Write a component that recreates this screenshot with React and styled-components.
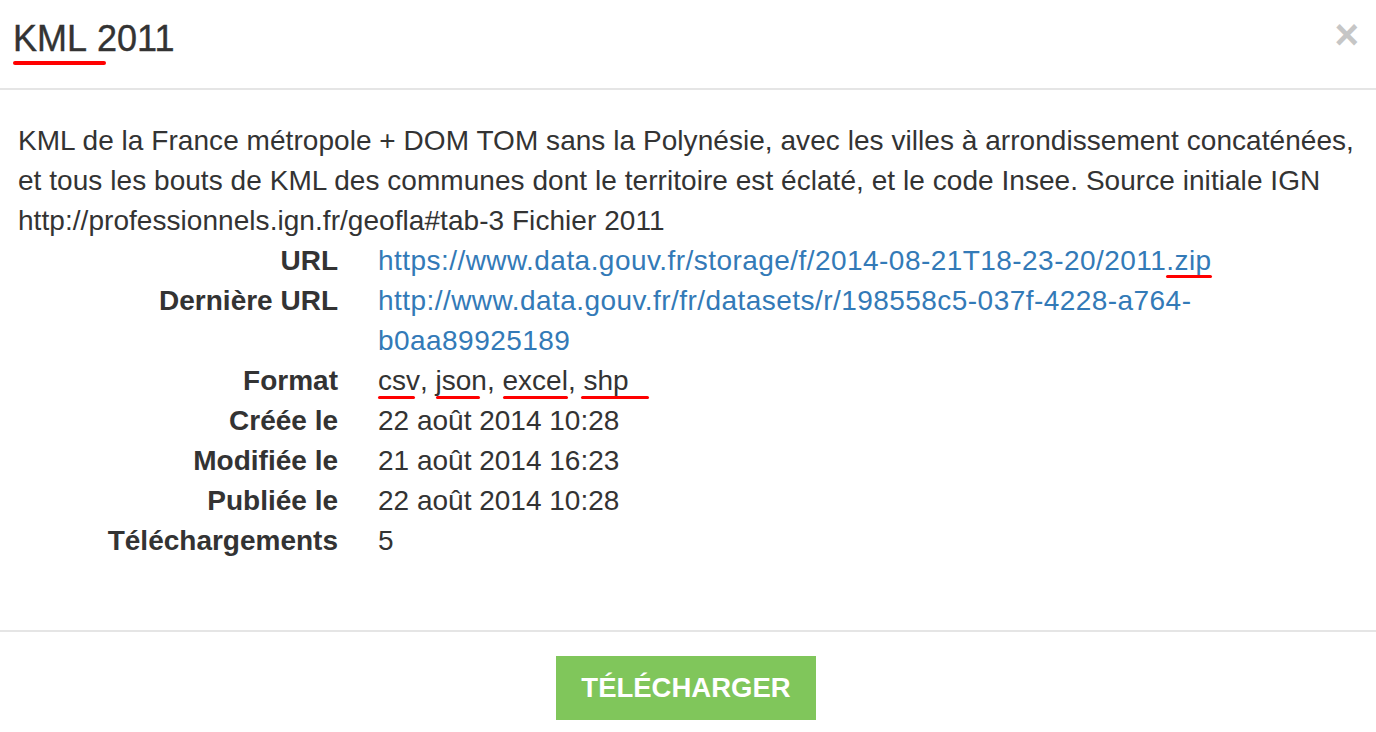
import React from 'react';
import styled, { createGlobalStyle } from 'styled-components';

const COLORS = {
  text: '#333333',
  link: '#337ab7',
  rule: '#e5e5e5',
  close: '#c6c6c6',
  mark: '#ff0000',
  green: '#80c65b',
};

const App = () => {
  // built at render time, the styled parts below are defined by then
  const details = [
    {
      label: 'URL',
      value: (
        <Link href="#">
          https://www.data.gouv.fr/storage/f/2014-08-21T18-23-20/2011
          <Mark $top={-1}>.zip</Mark>
        </Link>
      ),
    },
    {
      label: 'Dernière URL',
      value: (
        <Link href="#">
          http://www.data.gouv.fr/fr/datasets/r/198558c5-037f-4228-a764-b0aa89925189
        </Link>
      ),
    },
    {
      label: 'Format',
      value: (
        <>
          <Mark $right={5}>csv</Mark>, <Mark $right={7}>json</Mark>,{' '}
          <Mark>excel</Mark>, <Mark $left={-2} $right={-20}>shp</Mark>
        </>
      ),
    },
    { label: 'Créée le', value: '22 août 2014 10:28' },
    { label: 'Modifiée le', value: '21 août 2014 16:23' },
    { label: 'Publiée le', value: '22 août 2014 10:28' },
    { label: 'Téléchargements', value: '5' },
  ];

  return (
    <>
      <GlobalStyle />
      <Modal>
        <Header>
          <Title>
            <Mark $top={2} $height={4} $right={-19}>KML</Mark> 2011
          </Title>
          <Close type="button" aria-label="Fermer">
            ×
          </Close>
        </Header>

        <Body>
          <Description>
            KML de la France métropole + DOM TOM sans la Polynésie, avec les
            villes à arrondissement concaténées, et tous les bouts de KML des
            communes dont le territoire est éclaté, et le code Insee. Source
            initiale IGN http://professionnels.ign.fr/geofla#tab-3 Fichier 2011
          </Description>

          <Details>
            {details.map(({ label, value }) => (
              <React.Fragment key={label}>
                <Term>{label}</Term>
                <Value>{value}</Value>
              </React.Fragment>
            ))}
          </Details>
        </Body>

        <Footer>
          <DownloadButton type="button">Télécharger</DownloadButton>
        </Footer>
      </Modal>
    </>
  );
};

const GlobalStyle = createGlobalStyle`
  html, body {
    margin: 0;
    padding: 0;
    background: #ffffff;
  }
  body {
    font-family: "Liberation Sans", Arial, Helvetica, sans-serif;
    color: ${COLORS.text};
  }
`;

const Modal = styled.div`
  width: 1376px;
  background: #ffffff;
`;

const Header = styled.div`
  display: flex;
  align-items: flex-start;
  justify-content: space-between;
  height: 90px;
  box-sizing: border-box;
  padding: 19px 17px 0 13px;
  border-bottom: 2px solid ${COLORS.rule};
`;

const Title = styled.h4`
  margin: 0;
  font-size: 36px;
  line-height: 40px;
  font-weight: 400;
  -webkit-text-stroke: 0.4px ${COLORS.text};
  color: ${COLORS.text};
`;

const Close = styled.button`
  margin-top: -5px;
  padding: 0;
  border: 0;
  background: transparent;
  font-family: "Liberation Sans", Arial, sans-serif;
  font-size: 42px;
  line-height: 42px;
  font-weight: 700;
  color: ${COLORS.close};
  cursor: pointer;
`;

const Body = styled.div`
  padding: 31px 18px 69px;
  font-size: 28px;
  line-height: 40px;
`;

const Description = styled.div`
  letter-spacing: 0.05px;
`;

const Details = styled.dl`
  display: grid;
  grid-template-columns: 320px 1fr;
  column-gap: 40px;
  margin: 0;
`;

const Term = styled.dt`
  text-align: right;
  font-weight: 700;
  white-space: nowrap;
`;

const Value = styled.dd`
  margin: 0;
`;

const Link = styled.a`
  color: ${COLORS.link};
  text-decoration: none;
  letter-spacing: 0.45px;
`;

const Mark = styled.span`
  position: relative;

  &::after {
    content: '';
    position: absolute;
    left: ${p => p.$left ?? 0}px;
    right: ${p => p.$right ?? 0}px;
    top: calc(100% + ${p => p.$top ?? 0}px);
    height: ${p => p.$height ?? 3}px;
    border-radius: 2px;
    background: ${COLORS.mark};
  }
`;

const Footer = styled.div`
  display: flex;
  justify-content: center;
  padding: 24px 4px 12px 0;
  border-top: 2px solid ${COLORS.rule};
`;

const DownloadButton = styled.button`
  width: 260px;
  height: 64px;
  padding: 0;
  border: 0;
  background: ${COLORS.green};
  color: #ffffff;
  font-family: "Liberation Sans", Arial, sans-serif;
  font-size: 27.5px;
  font-weight: 700;
  text-transform: uppercase;
  cursor: pointer;
`;

export default App;
